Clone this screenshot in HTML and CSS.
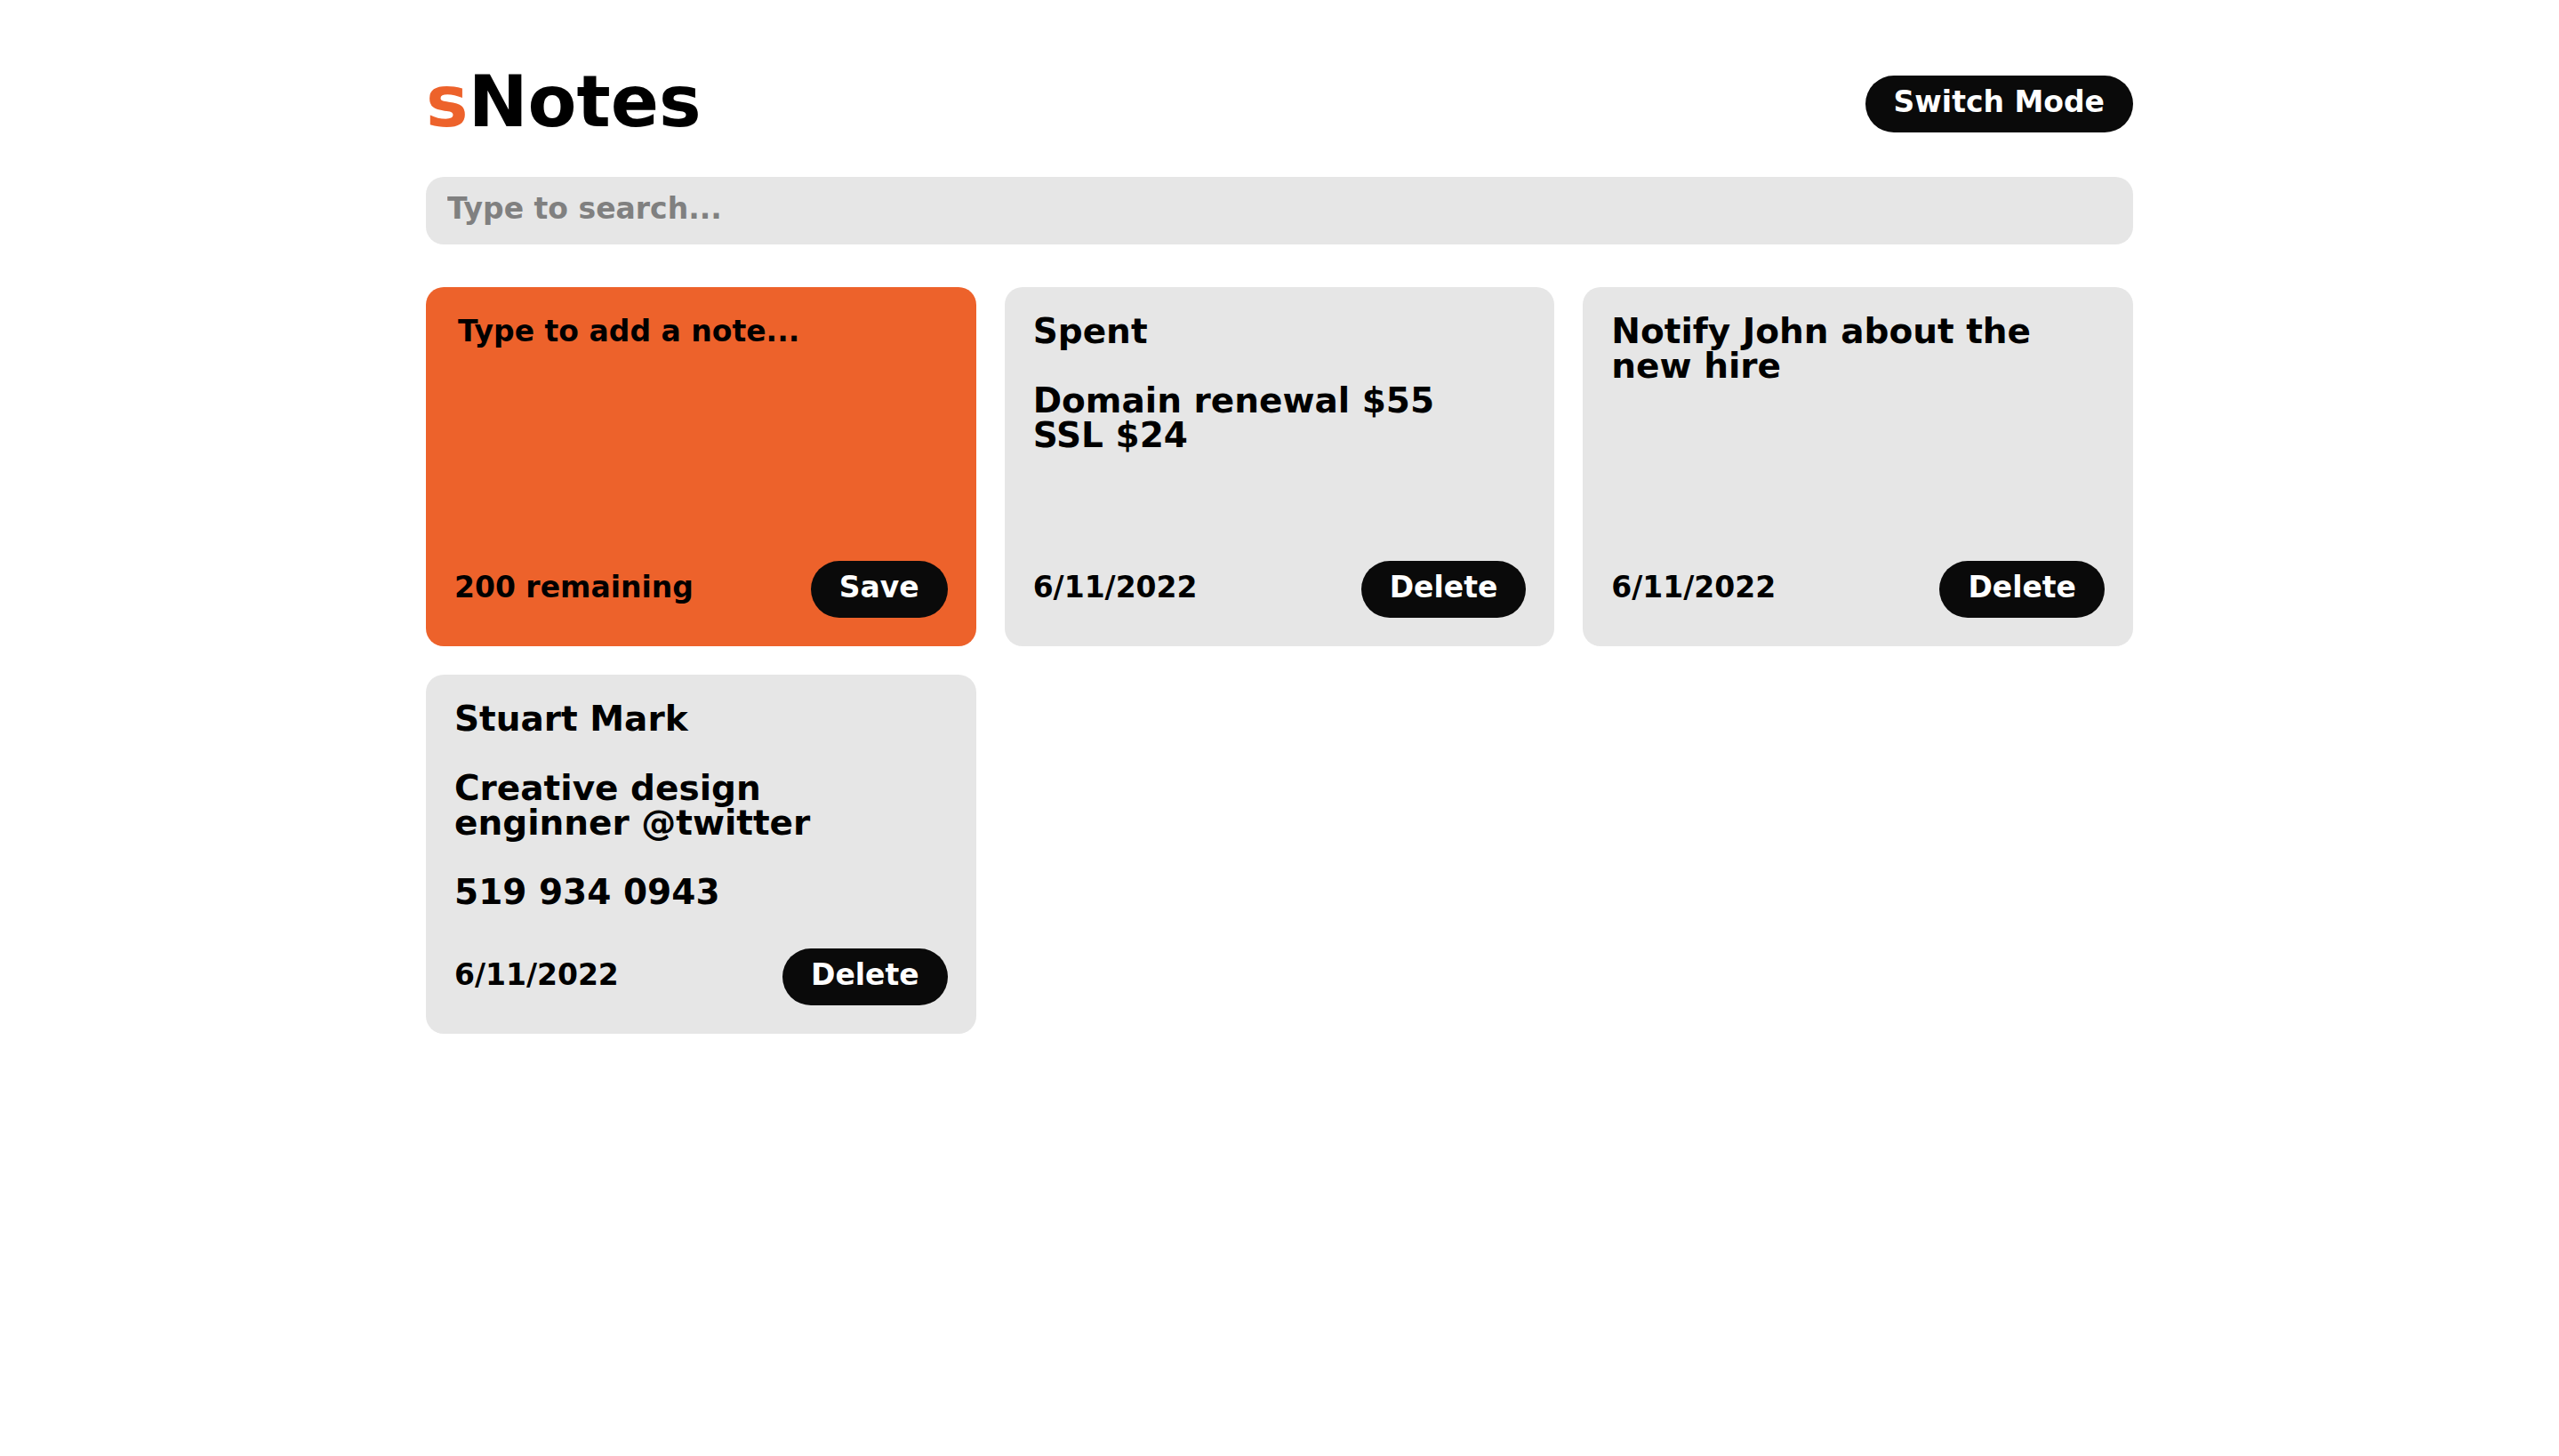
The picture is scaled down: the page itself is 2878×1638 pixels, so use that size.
FILE: index.html
```html
<!DOCTYPE html>
<html lang="en">
<head>
<meta charset="utf-8">
<meta name="viewport" content="width=device-width, initial-scale=1">
<title>sNotes</title>
<link rel="stylesheet" href="styles.css">
</head>
<body>
<div class="app">
  <header class="header">
    <h1 class="logo"><span class="logo-accent">s</span>Notes</h1>
    <button class="button" type="button">Switch Mode</button>
  </header>
  <input class="search" type="search" placeholder="Type to search..." aria-label="Search notes">
  <main class="notes">
    <form class="note note-new">
      <textarea class="note-input" placeholder="Type to add a note..." aria-label="New note" maxlength="200"></textarea>
      <div class="note-footer">
        <span class="note-meta">200 remaining</span>
        <button class="button" type="button">Save</button>
      </div>
    </form>
    <article class="note">
      <p class="note-text">Spent

Domain renewal $55
SSL $24</p>
      <div class="note-footer">
        <span class="note-meta">6/11/2022</span>
        <button class="button" type="button">Delete</button>
      </div>
    </article>
    <article class="note">
      <p class="note-text">Notify John about the new hire</p>
      <div class="note-footer">
        <span class="note-meta">6/11/2022</span>
        <button class="button" type="button">Delete</button>
      </div>
    </article>
    <article class="note">
      <p class="note-text">Stuart Mark

Creative design
enginner @twitter

519 934 0943</p>
      <div class="note-footer">
        <span class="note-meta">6/11/2022</span>
        <button class="button" type="button">Delete</button>
      </div>
    </article>
  </main>
</div>
</body>
</html>
```
FILE: styles.css
```css
* {
  box-sizing: border-box;
}

body {
  margin: 0;
  background: #fff;
  color: #000;
  font-family: "DejaVu Sans", sans-serif;
  font-weight: 700;
}

button,
input,
textarea {
  font: inherit;
}

.app {
  max-width: 1984px;
  margin: 0 auto;
  padding: 72px 32px;
}

.header {
  display: flex;
  align-items: center;
  justify-content: space-between;
  margin-bottom: 37px;
}

.logo {
  margin: 0;
  padding-bottom: 4px;
  font-size: 80px;
  line-height: 86px;
}

.logo-accent {
  color: #ed622b;
}

.button {
  padding: 14px 32px 18px;
  border: 0;
  border-radius: 32px;
  background: #0a0a0a;
  color: #fff;
  font-size: 33px;
  line-height: 32px;
  cursor: pointer;
}

.search {
  display: block;
  width: 100%;
  padding: 16px 24px 20px;
  border: 0;
  border-radius: 20px;
  background: #e6e6e6;
  font-size: 33px;
  line-height: 40px;
  appearance: none;
}

.search::placeholder {
  color: #808080;
  opacity: 1;
}

.notes {
  display: grid;
  grid-template-columns: repeat(3, minmax(0, 1fr));
  gap: 32px;
  margin-top: 48px;
}

.note {
  display: flex;
  flex-direction: column;
  justify-content: space-between;
  min-height: 404px;
  padding: 30px 32px 32px;
  border-radius: 20px;
  background: #e6e6e6;
}

.note-new {
  background: #ed622b;
}

.note-input {
  flex: 1;
  width: 100%;
  padding: 0 4px;
  border: 0;
  background: transparent;
  font-size: 33px;
  line-height: 39px;
  resize: none;
}

.note-input::placeholder {
  color: #000;
  opacity: 1;
}

.note-text {
  margin: 0;
  font-size: 39px;
  line-height: 39px;
  white-space: pre-wrap;
}

.note-footer {
  display: flex;
  align-items: center;
  justify-content: space-between;
}

.note-meta {
  padding-bottom: 4px;
  font-size: 33px;
  line-height: 32px;
}

@media (max-width: 1500px) {
  .notes {
    grid-template-columns: repeat(auto-fit, minmax(min(100%, 480px), 1fr));
  }
}
```
